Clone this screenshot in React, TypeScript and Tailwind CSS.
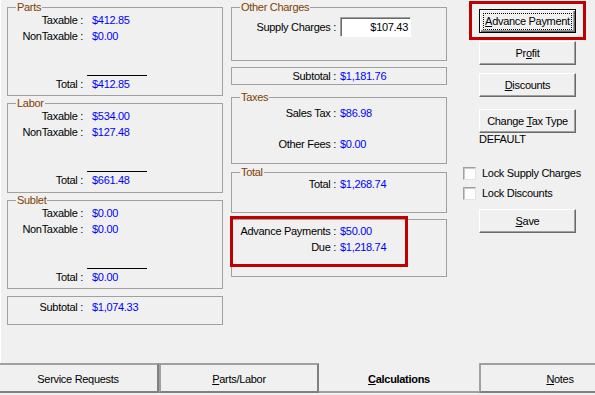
import React from "react";

function Group({ title, className, children }: { title: string; className: string; children?: React.ReactNode }) {
  return (
    <fieldset className={`border border-[#a0a0a0] ${className}`}>
      <legend className="ml-[8px] px-[1px] leading-[14px] text-[#804000]">{title}</legend>
      {children}
    </fieldset>
  );
}

// label / value row used in the left column boxes
function LRow({ label, value, className = "" }: { label: string; value: string; className?: string }) {
  return (
    <div className={`flex h-[13px] ${className}`}>
      <div className="w-[75px] text-right">{label}</div>
      <div className="ml-[4px] pl-[5px] text-[#0000ff]">{value}</div>
    </div>
  );
}

function LTotal({ value }: { value: string }) {
  return (
    <div className="mt-[32px] flex">
      <div className="w-[75px] pt-[3px] text-right">Total :</div>
      <div className="ml-[4px] w-[60px] border-t border-black pl-[5px] pt-[2px] text-[#0000ff]">{value}</div>
    </div>
  );
}

function Section({ title, taxable, nonTaxable, total, className }: { title: string; taxable: string; nonTaxable: string; total: string; className: string }) {
  return (
    <Group title={title} className={className}>
      <LRow label="Taxable :" value={taxable} />
      <LRow label="NonTaxable :" value={nonTaxable} className="mt-[3px]" />
      <LTotal value={total} />
    </Group>
  );
}

// middle column row
function MRow({ label, value, className = "" }: { label: string; value: string; className?: string }) {
  return (
    <div className={`flex h-[13px] ${className}`}>
      <div className="w-[104px] whitespace-nowrap text-right">{label}</div>
      <div className="ml-[4px] text-[#0000ff]">{value}</div>
    </div>
  );
}

function Btn({ children, className = "" }: { children: React.ReactNode; className?: string }) {
  return (
    <button className={`flex h-[24px] w-[97px] items-center justify-center border border-t-white border-l-white border-b-[#696969] border-r-[#696969] bg-[#f0f0f0] shadow-[inset_-1px_-1px_#a0a0a0] ${className}`}>
      <span>{children}</span>
    </button>
  );
}

function Check({ label, className = "" }: { label: string; className?: string }) {
  return (
    <div className={`flex h-[13px] items-center ${className}`}>
      <span className="h-[13px] w-[13px] border border-t-[#a0a0a0] border-l-[#a0a0a0] border-b-[#e3e3e3] border-r-[#e3e3e3] bg-white shadow-[inset_1px_1px_#c8c8c8]" />
      <span className="ml-[6px]">{label}</span>
    </div>
  );
}

export default function App() {
  return (
    <div className="flex h-[395px] w-[595px] flex-col overflow-hidden bg-[#f0f0f0] font-['Liberation_Sans',Arial,sans-serif] text-[11px] leading-[13px] tracking-[-0.3px] text-black">
      <div className="flex h-[363px] border-l border-white">
        {/* left column */}
        <div className="ml-[6px] flex w-[216px] flex-col">
          <Section title="Parts" taxable="$412.85" nonTaxable="$0.00" total="$412.85" className="h-[96px]" />
          <Section title="Labor" taxable="$534.00" nonTaxable="$127.48" total="$661.48" className="h-[97px]" />
          <Section title="Sublet" taxable="$0.00" nonTaxable="$0.00" total="$0.00" className="h-[96px]" />
          <div className="mt-[7px] h-[29px] border border-[#a0a0a0] pt-[4px]">
            <LRow label="Subtotal :" value="$1,074.33" />
          </div>
        </div>

        {/* middle column */}
        <div className="ml-[8px] flex w-[216px] flex-col">
          <Group title="Other Charges" className="h-[61px]">
            <div className="mt-[3px] flex items-center">
              <div className="w-[104px] text-right">Supply Charges :</div>
              <div className="ml-[4px] flex h-[20px] w-[71px] items-center justify-end border border-t-[#a0a0a0] border-l-[#a0a0a0] border-b-white border-r-white bg-white pr-[2px] shadow-[inset_1px_1px_#696969]">
                $107.43
              </div>
            </div>
          </Group>
          <div className="mt-[6px] flex h-[18px] items-center border border-[#a0a0a0]">
            <MRow label="Subtotal :" value="$1,181.76" />
          </div>
          <Group title="Taxes" className="mt-[5px] h-[74px]">
            <MRow label="Sales Tax :" value="$86.98" className="mt-[3px]" />
            <MRow label="Other Fees :" value="$0.00" className="mt-[18px]" />
          </Group>
          <Group title="Total" className="mt-[1px] h-[48px]">
            <MRow label="Total :" value="$1,268.74" className="mt-[-1px]" />
          </Group>
          <div className="relative mt-[6px] h-[58px] border border-[#a0a0a0] pt-[5px]">
            <MRow label="Advance Payments :" value="$50.00" />
            <MRow label="Due :" value="$1,218.74" className="mt-[3px]" />
            <div className="absolute left-[-2px] top-[-4px] h-[51px] w-[178px] border-[3px] border-[#c00000]" />
          </div>
        </div>

        {/* right column */}
        <div className="ml-[16px] flex flex-col pt-[9px]">
          <div className="ml-[16px] flex flex-col">
            <div className="relative">
              <button className="flex h-[24px] w-[97px] items-center justify-center border border-black bg-[#f0f0f0] shadow-[inset_1px_1px_#fff,inset_-1px_-1px_#696969,inset_-2px_-2px_#a0a0a0]">
                <span className="flex h-[17px] w-[89px] items-center justify-center border border-dotted border-black">
                  <span>
                    <span className="underline">A</span>dvance Payment
                  </span>
                </span>
              </button>
              <div className="absolute left-[-10px] top-[-8px] h-[39px] w-[117px] border-[3px] border-[#c00000]" />
            </div>
            <Btn className="mt-[8px]">
              Pr<span className="underline">o</span>fit
            </Btn>
            <Btn className="mt-[8px]">
              <span className="underline">D</span>iscounts
            </Btn>
            <Btn className="mt-[12px]">
              Change <span className="underline">T</span>ax Type
            </Btn>
            <div className="h-[13px]">DEFAULT</div>
          </div>
          <Check label="Lock Supply Charges" className="mt-[21px]" />
          <Check label="Lock Discounts" className="mt-[7px]" />
          <Btn className="ml-[16px] mt-[9px]">
            <span className="underline">S</span>ave
          </Btn>
        </div>
      </div>

      {/* tabs along the bottom */}
      <div className="ml-[-1px] flex h-[32px]">
        <div className="flex h-[30px] w-[160px] shrink-0 items-center justify-center border-y-2 border-r-2 border-t-[#a0a0a0] border-r-[#808080] border-b-[#808080] pt-[2px]">
          Service Requests
        </div>
        <div className="flex h-[30px] w-[160px] shrink-0 items-center justify-center border-2 border-t-[#a0a0a0] border-l-[#a0a0a0] border-r-[#808080] border-b-[#808080] pt-[2px]">
          <span><span className="underline">P</span>arts/Labor</span>
        </div>
        <div className="flex h-[30px] w-[160px] shrink-0 items-center justify-center border-b-2 border-b-[#a0a0a0] pt-[4px] font-bold">
          <span><span className="underline">C</span>alculations</span>
        </div>
        <div className="flex h-[30px] w-[160px] shrink-0 items-center justify-center border-y-2 border-l-2 border-t-[#a0a0a0] border-l-[#a0a0a0] border-b-[#808080] pt-[2px]">
          <span><span className="underline">N</span>otes</span>
        </div>
      </div>
    </div>
  );
}
